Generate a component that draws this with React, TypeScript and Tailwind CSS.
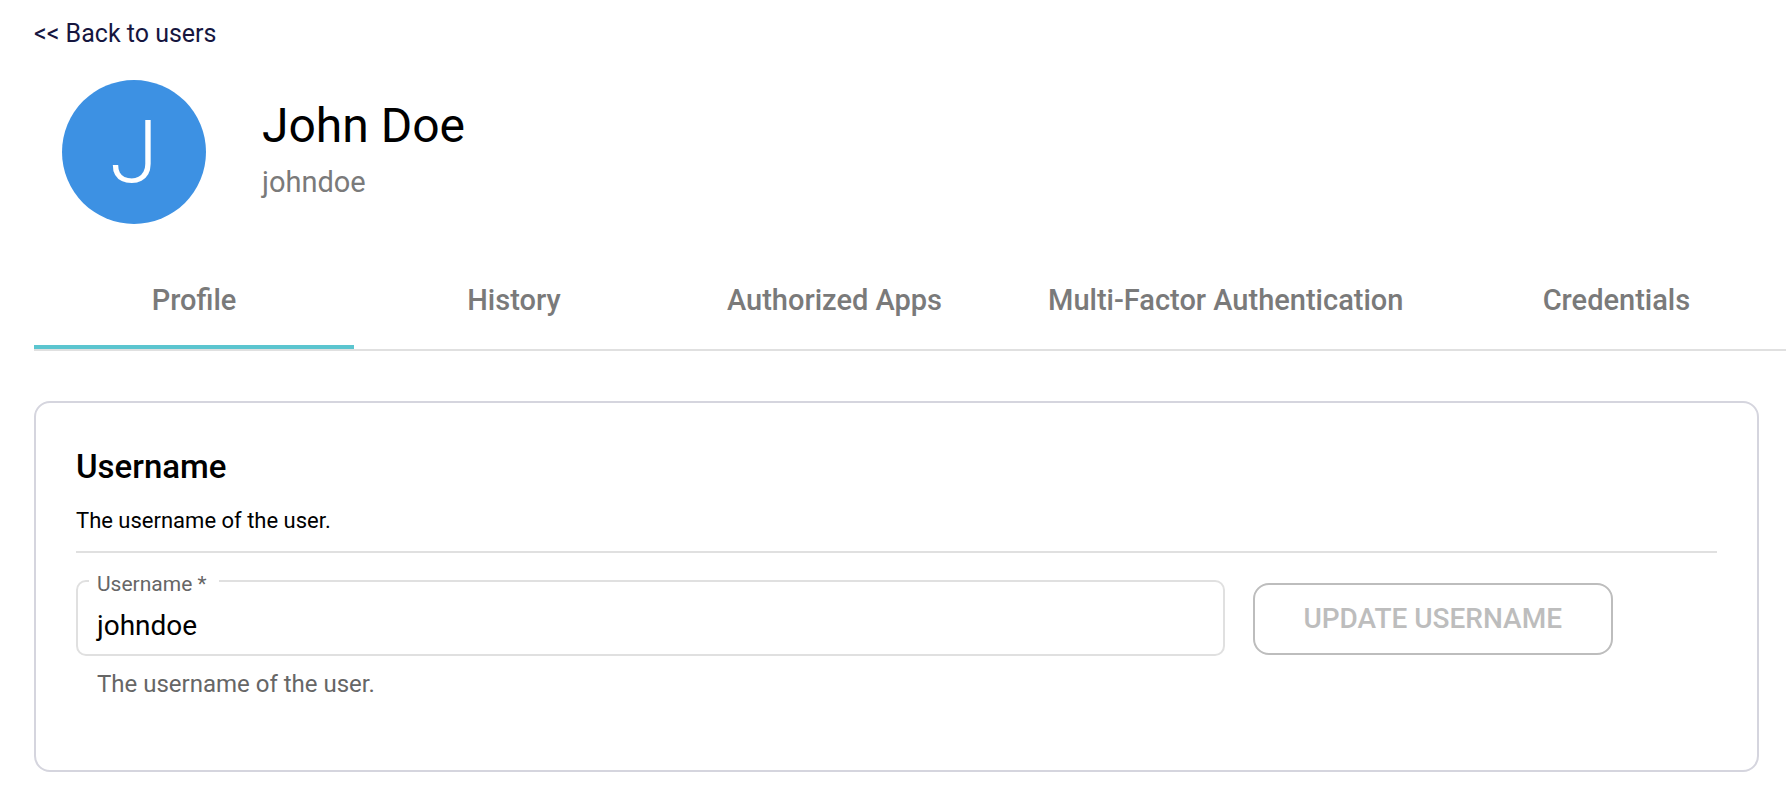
import { useState } from "react";

const tabs = ["Profile", "History", "Authorized Apps", "Multi-Factor Authentication", "Credentials"];

export default function App() {
  const [active, setActive] = useState("Profile");
  const [username, setUsername] = useState("johndoe");
  const unchanged = username === "johndoe";

  return (
    <main className="min-h-screen overflow-x-hidden bg-white pt-4 pl-[34px] font-['Roboto',sans-serif] text-black">
      <a href="#users" className="inline-block text-[25px] leading-9 text-[#16163f]">
        &lt;&lt; Back to users
      </a>

      <header className="mt-7 flex gap-14 pl-7">
        <div className="flex size-36 shrink-0 items-center justify-center rounded-full bg-[#3d91e3] text-[88px] leading-none font-light text-white">
          J
        </div>
        <div className="pt-4">
          <h1 className="text-[48px] leading-[60px]">John Doe</h1>
          <p className="mt-2 text-[29px] leading-9 text-[#7a7a7a]">johndoe</p>
        </div>
      </header>

      <nav role="tablist" aria-label="User sections" className="mt-8 flex border-b-2 border-[#e0e0e0]">
        {tabs.map((tab) => (
          <button
            key={tab}
            type="button"
            role="tab"
            aria-selected={active === tab}
            onClick={() => setActive(tab)}
            className={`h-[93px] min-w-80 shrink-0 border-b-4 px-[53px] text-[29px] font-medium text-[#7a7a7a] ${
              active === tab ? "border-[#5bc5cf]" : "border-transparent"
            }`}
          >
            {tab}
          </button>
        ))}
      </nav>

      <section className="mt-[50px] mr-[27px] rounded-2xl border-2 border-[#d5d5de] px-10 pt-[42px] pb-[68px]">
        <h2 className="text-[33px] leading-[44px] font-medium">Username</h2>
        <p className="mt-4 text-[22px] leading-8">The username of the user.</p>
        <hr className="mt-[14px] border-t-2 border-[#e0e0e0]" />

        <form className="mt-[27px] flex items-start gap-7" onSubmit={(event) => event.preventDefault()}>
          <div className="w-[70%]">
            <div className="relative">
              <label
                htmlFor="username"
                className="absolute -top-2 left-[13px] bg-white pr-3 pl-2 text-[21px] leading-6 text-[#666666]"
              >
                Username *
              </label>
              <input
                id="username"
                required
                value={username}
                onChange={(event) => setUsername(event.target.value)}
                aria-describedby="username-help"
                className="h-[76px] w-full rounded-[10px] border-2 border-[#e0e0e0] px-4 pt-[14px] indent-[3px] text-[28px] outline-none"
              />
            </div>
            <p id="username-help" className="mt-2.5 pl-[21px] text-[24px] leading-9 text-[#666666]">
              The username of the user.
            </p>
          </div>
          <button
            type="submit"
            disabled={unchanged}
            className="mt-[3px] h-[72px] w-[360px] shrink-0 rounded-2xl border-2 border-[#bdbdbd] text-[28px] font-medium text-[#bdbdbd]"
          >
            UPDATE USERNAME
          </button>
        </form>
      </section>
    </main>
  );
}
